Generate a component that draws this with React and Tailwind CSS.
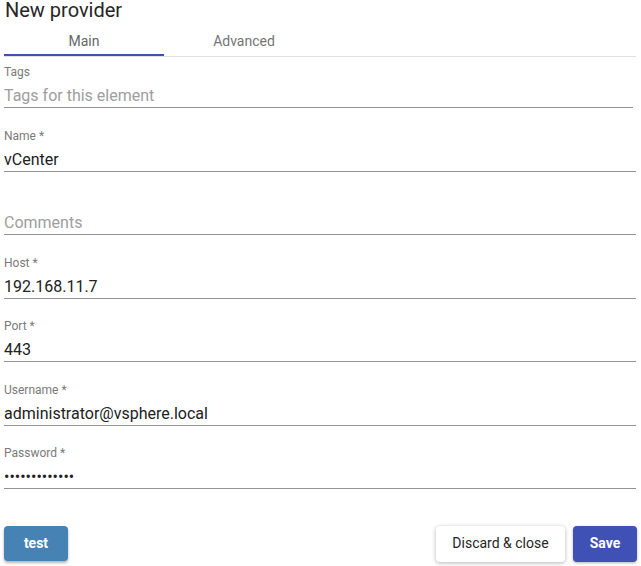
import { useState } from 'react'

const FIELDS = [
  { label: 'Tags', placeholder: 'Tags for this element', value: '', short: true },
  { label: 'Name *', value: 'vCenter' },
  { label: '', placeholder: 'Comments', value: '' },
  { label: 'Host *', value: '192.168.11.7' },
  { label: 'Port *', value: '443' },
  { label: 'Username *', value: 'administrator@vsphere.local' },
  { label: 'Password *', value: 'vmware.local1', password: true },
]

function Field({ f }) {
  return (
    <div className={f.short ? 'mb-[20.5px] mr-[3px]' : 'mb-[20.5px]'}>
      <div className="h-[14px] text-[12px] leading-[14px] text-[#7a7a7a]">{f.label}</div>
      <div className="mt-[7px] h-[22px] border-b border-[#949494]">
        <input
          type={f.password ? 'password' : 'text'}
          defaultValue={f.value}
          placeholder={f.placeholder}
          className="block h-[20px] w-full bg-transparent p-0 text-[16px] leading-[20px] text-[#212121] outline-none placeholder:text-[#9e9e9e]"
        />
      </div>
    </div>
  )
}

export default function App() {
  const [tab, setTab] = useState('main')

  return (
    <div className="h-[566px] w-[641px] bg-white pl-[4px] pr-[5px] font-['Roboto',sans-serif] text-[#212121]">
      <h1 className="h-[24px] pl-[1px] text-[20px] font-normal leading-[21px] text-[#262626]">New provider</h1>

      <div className="flex h-[33px] border-b border-[#e0e0e0]">
        {[['main', 'Main'], ['advanced', 'Advanced']].map(([k, l]) => (
          <button
            key={k}
            onClick={() => setTab(k)}
            className={`relative w-[160px] pt-[2px] text-[14px] ${tab === k ? 'text-[#666]' : 'text-[#757575]'}`}
          >
            {l}
            {tab === k && <span className="absolute bottom-[0px] left-0 h-[2px] w-full bg-[#3f51b5]" />}
          </button>
        ))}
      </div>

      <div className="flex flex-col pt-[8px]">
        {FIELDS.map((f, i) => <Field key={i} f={f} />)}
      </div>

      <div className="mt-[16px] flex items-center">
        <button className="h-[35px] w-[64px] rounded-[4px] bg-[#4682b4] text-[14px] font-bold text-white shadow-[0_2px_3px_rgba(0,0,0,0.3)]">
          test
        </button>
        <div className="ml-auto flex gap-[8px]">
          <button className="h-[36px] w-[129px] rounded-[4px] bg-white text-[14px] font-normal text-[#262626] shadow-[0_1px_4px_rgba(0,0,0,0.3)]">
            Discard &amp; close
          </button>
          <button className="-mr-[1px] h-[36px] w-[64px] rounded-[4px] bg-[#3f51b5] text-[14px] font-bold text-white shadow-[0_1px_3px_rgba(0,0,0,0.3)]">
            Save
          </button>
        </div>
      </div>
    </div>
  )
}
